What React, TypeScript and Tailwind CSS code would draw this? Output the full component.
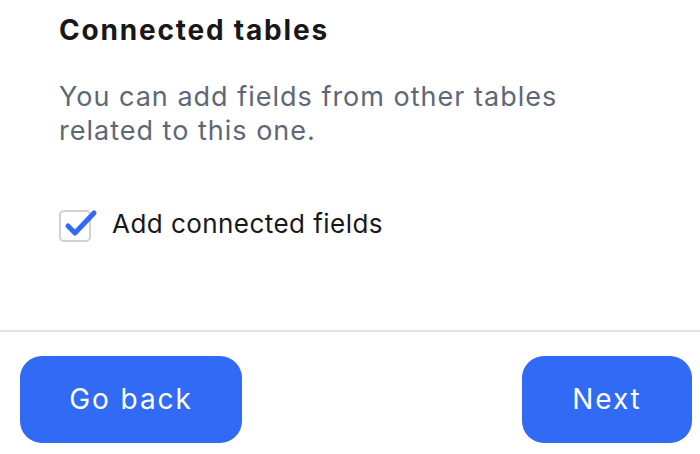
import React from "react";

export default function App() {
  return (
    <div
      className="w-[700px] h-[454px] bg-white flex flex-col overflow-hidden"
      style={{ fontFamily: "Inter, 'Noto Sans', sans-serif" }}
    >
      <div className="h-[330px] pl-[59px] pt-[12px] flex flex-col">
        <h1 className="text-[28px] leading-[36px] font-bold tracking-[1.8px] text-[#18181b]">Connected tables</h1>
        <p className="mt-[32px] text-[27px] leading-[34px] tracking-[1px] text-[#5e6778]">
          You can add fields from other tables
          <br />
          related to this one.
        </p>
        <label className="mt-[62px] flex items-center gap-[21px]">
          <span className="relative w-[32px] h-[32px] rounded-[5px] border-2 border-[#cdd1d8] bg-white">
            <svg
              className="absolute left-[3px] top-[-3px]"
              width="34"
              height="30"
              viewBox="0 0 34 30"
              fill="none"
            >
              <path
                d="M4 17 L11 24 L30 4"
                stroke="#306af5"
                strokeWidth="5"
                strokeLinecap="round"
                strokeLinejoin="round"
              />
            </svg>
          </span>
          <span className="-mt-[4px] text-[26px] leading-[34px] tracking-[0.45px] text-[#18181b]">Add connected fields</span>
        </label>
      </div>
      <div className="h-[1.5px] bg-[#e2e2ea]" />
      <div className="flex justify-between pl-[20px] pr-[8px] pt-[24px]">
        <button className="w-[222px] h-[87px] rounded-[22px] bg-[#306af5] text-white text-[28px] tracking-[1.9px]">
          Go back
        </button>
        <button className="w-[170px] h-[87px] rounded-[22px] bg-[#306af5] text-white text-[28px] tracking-[1.9px]">
          Next
        </button>
      </div>
    </div>
  );
}
